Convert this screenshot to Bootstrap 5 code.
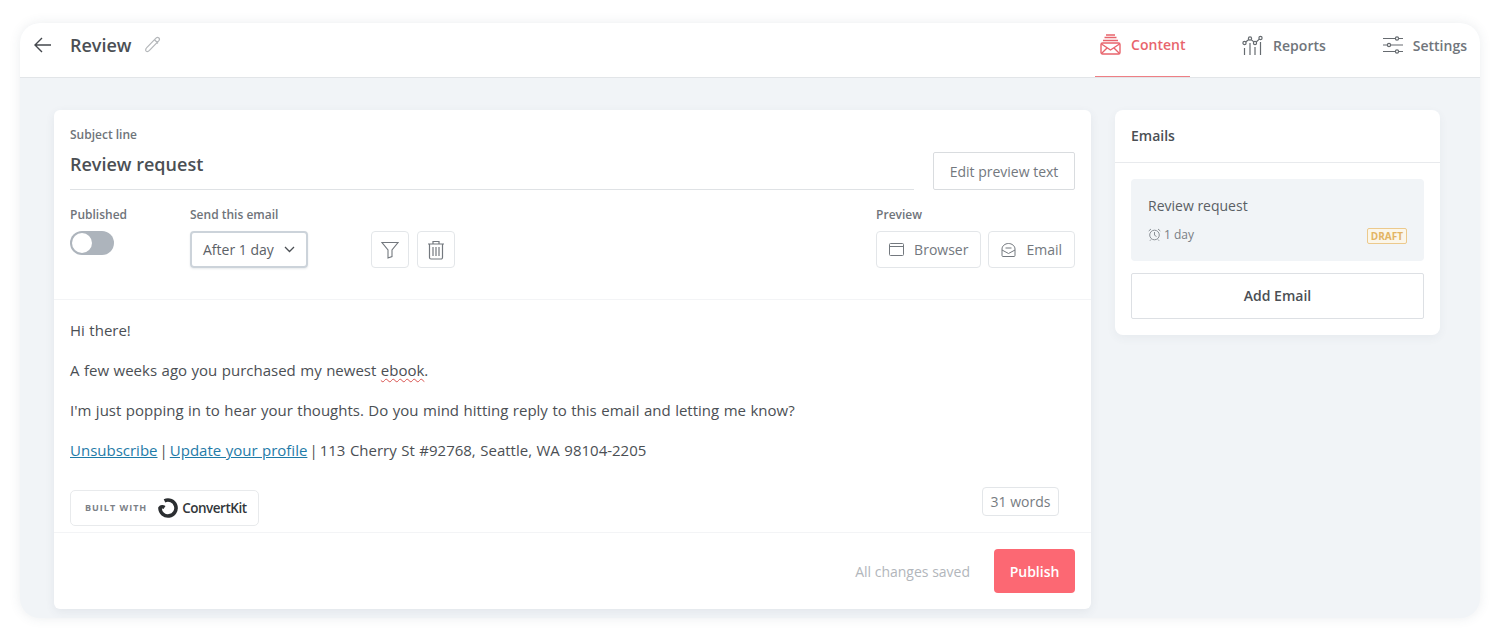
<!DOCTYPE html>
<html lang="en">
<head>
    <meta charset="UTF-8">
    <meta name="viewport" content="width=device-width, initial-scale=1.0">
    <title>Review</title>
    <link href="https://cdn.jsdelivr.net/npm/bootstrap@5.3.0/dist/css/bootstrap.min.css" rel="stylesheet">
    <script src="https://cdn.jsdelivr.net/npm/bootstrap@5.3.0/dist/js/bootstrap.bundle.min.js"></script>
    <style>
        html, body { height: 640px; overflow: hidden; }
        body {
            background: #fff;
            color: #4b4f54;
            font-family: "Open Sans", "Liberation Sans", sans-serif;
            font-size: 15px;
            padding: 23px 20px 22px;
        }
        svg { display: block; flex: none; }
        .app-frame {
            height: 595px;
            border-radius: 20px;
            background: #f1f4f7;
            box-shadow: 0 0 12px rgba(60, 80, 100, .1);
            overflow: hidden;
        }
        .top-bar {
            height: 55px;
            flex: none;
            background: #fff;
            border-bottom: 1px solid #e2e5e8;
            padding-left: 14px;
        }
        .title-group { padding-bottom: 10px; }
        .page-title { font-size: 18px; font-weight: 550; margin: 0 12px 0 19px; line-height: 44px; color: #4b4f54; }
        .tab-link {
            height: 54px;
            color: #70757b;
            font-size: 14px;
            font-weight: 600;
            text-decoration: none;
            gap: 10px;
            padding: 0 5px 10px;
        }
        .tab-link.is-active { color: #e8646c; border-bottom: 1px solid #ee7f85; }
        .tab-content-link { width: 95px; margin-right: 47px; }
        .tab-reports { margin-right: 47px; }
        .tab-settings { margin-right: 8px; }
        .main-area { padding: 32px 40px 0 34px; gap: 24px; }
        .mail-panel {
            width: 1037px;
            height: 499px;
            border: 0;
            border-radius: 6px;
            box-shadow: 0 3px 10px rgba(60, 80, 100, .08);
        }
        .side-panel {
            width: 325px;
            height: 225px;
            border: 0;
            border-radius: 8px;
            box-shadow: 0 3px 10px rgba(60, 80, 100, .06);
        }
        .mail-head { padding: 17px 16px 0; height: 190px; border-bottom: 1px solid #f3f4f6; }
        .field-label { font-size: 12px; font-weight: 600; color: #6f747a; line-height: 16px; }
        .subject-wrap { width: 844px; height: 63px; border-bottom: 1px solid #dfe2e5; }
        .subject-text { font-size: 18px; font-weight: 550; line-height: 24px; margin-top: 9px; color: #4b4f54; }
        .soft-btn {
            background: #fff;
            border: 1px solid #e3e6e9;
            border-radius: 4px;
            color: #73787e;
            font-size: 14px;
            height: 37px;
            padding: 0 12px;
            gap: 10px;
        }
        .edit-btn { width: 142px; height: 38px; margin-top: 25px; border-color: #d9dcdf; border-radius: 2px; padding: 0; justify-content: center; }
        .options-row { margin-top: 17px; }
        .toggle-col { width: 120px; }
        .switch-shape {
            width: 44px;
            height: 24px;
            background: #adb4bc;
            border-radius: 12px;
            margin-top: 8px;
            padding: 2px;
        }
        .switch-shape::after {
            content: "";
            display: block;
            width: 20px;
            height: 20px;
            background: #fff;
            border-radius: 50%;
        }
        .delay-col { width: 181px; }
        .delay-picker {
            width: 118px;
            height: 37px;
            margin-top: 8px;
            border: 2px solid #ccd3da;
            border-radius: 4px;
            padding: 0 11px;
            font-size: 14px;
            color: #5c6167;
            box-shadow: 0 1px 2px rgba(60, 80, 100, .12);
        }
        .square-btn { width: 38px; padding: 0; justify-content: center; }
        .tool-btns { margin-top: 24px; gap: 8px; }
        .preview-btns { margin-top: 8px; gap: 7px; }
        .mail-body { padding: 20px 16px 0; height: 233px; border-bottom: 1px solid #f3f4f6; }
        .mail-body p { margin: 0 0 20px; line-height: 20px; color: #4b4f54; word-spacing: .6px; }
        .mail-body a { color: #1f7ba8; }
        .pipe-sep { margin: 0 -2.5px; }
        .typo-word { text-decoration: underline wavy #d9534f 1px; text-underline-offset: 2px; }
        .brand-row { margin-top: 30px; }
        .built-tag {
            width: 189px;
            height: 36px;
            border: 1px solid #e8eaec;
            border-radius: 5px;
            padding-left: 14px;
            gap: 10px;
        }
        .built-text { font-size: 9px; font-weight: 700; letter-spacing: 1px; color: #7c8187; white-space: nowrap; }
        .brand-name { font-size: 13.5px; font-weight: 600; letter-spacing: -.5px; color: #33373b; margin-left: -7px; }
        .word-count {
            height: 29px;
            width: 77px;
            margin: -3px 16px 0 0;
            border: 1px solid #e3e6e9;
            border-radius: 4px;
            font-size: 14px;
            color: #777c82;
        }
        .mail-foot { padding: 16px; gap: 24px; }
        .saved-note { font-size: 14px; color: #b2b6bb; }
        .publish-btn {
            width: 81px;
            height: 44px;
            background: #fc6873;
            border: 0;
            border-radius: 4px;
            color: #fff;
            font-size: 14px;
            font-weight: 600;
            padding: 0;
        }
        .publish-btn:hover { background: #f45b66; color: #fff; }
        .side-head { height: 53px; padding: 0 16px; font-size: 14px; font-weight: 600; border-bottom: 1px solid #e8eaed; line-height: 52px; color: #4b4f54; }
        .side-body { padding: 16px; }
        .mail-item { height: 82px; background: #f1f4f7; border-radius: 4px; padding: 17px 17px 0; }
        .item-name { font-size: 14px; line-height: 20px; color: #5a5f65; }
        .item-meta { font-size: 12px; color: #797e84; margin-top: 9px; gap: 3px; line-height: 18px; }
        .draft-tag {
            border: 1px solid #ecc98c;
            border-radius: 2px;
            background: #fbf6ea;
            color: #e3b463;
            font-size: 10px;
            font-weight: 700;
            line-height: 14px;
            padding: 0 3px;
            margin: 3px 0 0 auto;
        }
        .add-btn {
            height: 46px;
            margin-top: 12px;
            background: #fff;
            border: 1px solid #dde0e4;
            border-radius: 2px;
            color: #4b4f54;
            font-size: 14px;
            font-weight: 600;
            padding-bottom: 8px;
        }
    </style>
</head>
<body>
    <div class="app-frame d-flex flex-column">
        <div class="top-bar d-flex align-items-start">
            <div class="title-group d-flex align-items-center">
                <svg width="17" height="16" viewBox="0 0 17 16" fill="none" stroke="#44484d" stroke-width="1.4"><path d="M17 8H1M8 1 1 8l7 7"/></svg>
                <h1 class="page-title">Review</h1>
                <svg width="18" height="18" viewBox="0 0 18 18" fill="none" stroke="#b4b7ba" stroke-width="1.2"><path d="M12 2.2 3 11.4c-1.6 1.7-1.5 3 -.8 3.7.8.7 2 .6 3.500-1l9-9.300c1-1.100.9-2.100.2-2.800-.8-.7-1.900-.8-2.900.2zM10.500 3.800l3.600 3.400"/></svg>
            </div>
            <div class="d-flex ms-auto">
                <a href="#" class="tab-link is-active tab-content-link d-flex align-items-center">
                    <svg width="21" height="21" viewBox="0 0 21 21" fill="none" stroke="#e8646c" stroke-width="1.4"><path d="M6 1h9M4.500 3.500h12M3 6.500h15"/><rect x="1" y="9" width="19" height="11" rx="1.500"/><path d="m1.500 10 9 6 9-6M1.500 19.500l6-6M19.500 19.500l-6-6"/></svg>
                    Content
                </a>
                <a href="#" class="tab-link tab-reports d-flex align-items-center">
                    <svg width="21" height="21" viewBox="0 0 21 21" fill="none" stroke="#666b70" stroke-width="1.200"><circle cx="2.500" cy="8" r="1.600"/><circle cx="8" cy="3.500" r="1.600"/><circle cx="13" cy="8" r="1.600"/><circle cx="18.500" cy="3" r="1.600"/><path d="m3.700 7 3.100-2.500M9.200 4.600l2.600 2.300M14.200 7l3.100-2.900M2.500 13v7M8 8v12M13 12v8M18.500 7v13"/></svg>
                    Reports
                </a>
                <a href="#" class="tab-link tab-settings d-flex align-items-center">
                    <svg width="20" height="20" viewBox="0 0 20 20" fill="none" stroke="#666b70" stroke-width="1.200"><path d="M0 3.500h12.500M15.500 3.500H20M0 10h4.500M7.500 10H20M0 16.500h12.500M15.500 16.500H20"/><circle cx="14" cy="3.500" r="1.600"/><circle cx="6" cy="10" r="1.600"/><circle cx="14" cy="16.500" r="1.600"/></svg>
                    Settings
                </a>
            </div>
        </div>
        <div class="main-area d-flex align-items-start">
            <div class="card mail-panel">
                <div class="mail-head">
                    <div class="d-flex justify-content-between align-items-start">
                        <div class="subject-wrap">
                            <div class="field-label">Subject line</div>
                            <div class="subject-text">Review request</div>
                        </div>
                        <button type="button" class="btn soft-btn edit-btn d-flex align-items-center">Edit preview text</button>
                    </div>
                    <div class="options-row d-flex align-items-start">
                        <div class="toggle-col">
                            <div class="field-label">Published</div>
                            <div class="switch-shape"></div>
                        </div>
                        <div class="delay-col">
                            <div class="field-label">Send this email</div>
                            <div class="delay-picker d-flex align-items-center justify-content-between">
                                After 1 day
                                <svg width="11" height="7" viewBox="0 0 11 7" fill="none" stroke="#4b4f54" stroke-width="1.300"><path d="m1 1 4.500 4.500L10 1"/></svg>
                            </div>
                        </div>
                        <div class="tool-btns d-flex">
                            <button type="button" class="btn soft-btn square-btn d-flex align-items-center">
                                <svg width="18" height="18" viewBox="0 0 18 18" fill="none" stroke="#73787e" stroke-width="1.100"><path d="M1 1.500h16l-6 7.500v6.500L7 17V9z"/></svg>
                            </button>
                            <button type="button" class="btn soft-btn square-btn d-flex align-items-center">
                                <svg width="18" height="20" viewBox="0 0 18 20" fill="none" stroke="#73787e" stroke-width="1.200"><path d="M1 4h16M6 4V1.500h6V4M2.500 4v13.500a1.500 1.500 0 0 0 1.500 1.500h10a1.500 1.500 0 0 0 1.500-1.500V4M6 7v9M9 7v9M12 7v9"/></svg>
                            </button>
                        </div>
                        <div class="ms-auto">
                            <div class="field-label">Preview</div>
                            <div class="preview-btns d-flex">
                                <button type="button" class="btn soft-btn d-flex align-items-center">
                                    <svg width="15" height="13" viewBox="0 0 15 13" fill="none" stroke="#73787e" stroke-width="1"><rect x=".5" y=".5" width="14" height="12" rx="1"/><path d="M.5 3.500h14"/></svg>
                                    Browser
                                </button>
                                <button type="button" class="btn soft-btn d-flex align-items-center">
                                    <svg width="15" height="14" viewBox="0 0 15 14" fill="none" stroke="#73787e" stroke-width="1"><path d="M1 6v6.500a1 1 0 0 0 1 1h11a1 1 0 0 0 1-1V6C14 3 11 .5 7.500 .5S1 3 1 6z"/><path d="M4.500 5h6M1 7l6.500 3.500L14 7"/></svg>
                                    Email
                                </button>
                            </div>
                        </div>
                    </div>
                </div>
                <div class="mail-body">
                    <p>Hi there!</p>
                    <p>A few weeks ago you purchased my newest <span class="typo-word">ebook</span>.</p>
                    <p>I'm just popping in to hear your thoughts. Do you mind hitting reply to this email and letting me know?</p>
                    <p><a href="#">Unsubscribe</a> <span class="pipe-sep">|</span> <a href="#">Update your profile</a> <span class="pipe-sep">|</span> 113 Cherry St #92768, Seattle, WA 98104-2205</p>
                    <div class="brand-row d-flex justify-content-between align-items-start">
                        <div class="built-tag d-flex align-items-center">
                            <span class="built-text">BUILT WITH</span>
                            <svg width="22" height="22" viewBox="0 0 22 22" fill="none" stroke="#2b2e31" stroke-width="3.600"><path d="M7.500 3.800A8 8 0 1 1 3 11C4 9.500 6 9.500 7.500 10.500"/></svg>
                            <span class="brand-name">ConvertKit</span>
                        </div>
                        <div class="word-count d-flex align-items-center justify-content-center">31 words</div>
                    </div>
                </div>
                <div class="mail-foot d-flex align-items-center justify-content-end">
                    <span class="saved-note">All changes saved</span>
                    <button type="button" class="btn publish-btn">Publish</button>
                </div>
            </div>
            <div class="card side-panel">
                <div class="side-head">Emails</div>
                <div class="side-body d-flex flex-column">
                    <div class="mail-item">
                        <div class="item-name">Review request</div>
                        <div class="item-meta d-flex align-items-center">
                            <svg width="13" height="13" viewBox="0 0 13 13" fill="none" stroke="#8b9096" stroke-width="1"><circle cx="6.500" cy="7" r="4.800"/><path d="M6.500 4v3.200l2 1.300M.7 3 3 1M12.300 3 10 1M3 11.500 2 12.700M10 11.500l1 1.200"/></svg>
                            <span>1 day</span>
                            <span class="draft-tag">DRAFT</span>
                        </div>
                    </div>
                    <button type="button" class="btn add-btn">Add Email</button>
                </div>
            </div>
        </div>
    </div>
</body>
</html>
